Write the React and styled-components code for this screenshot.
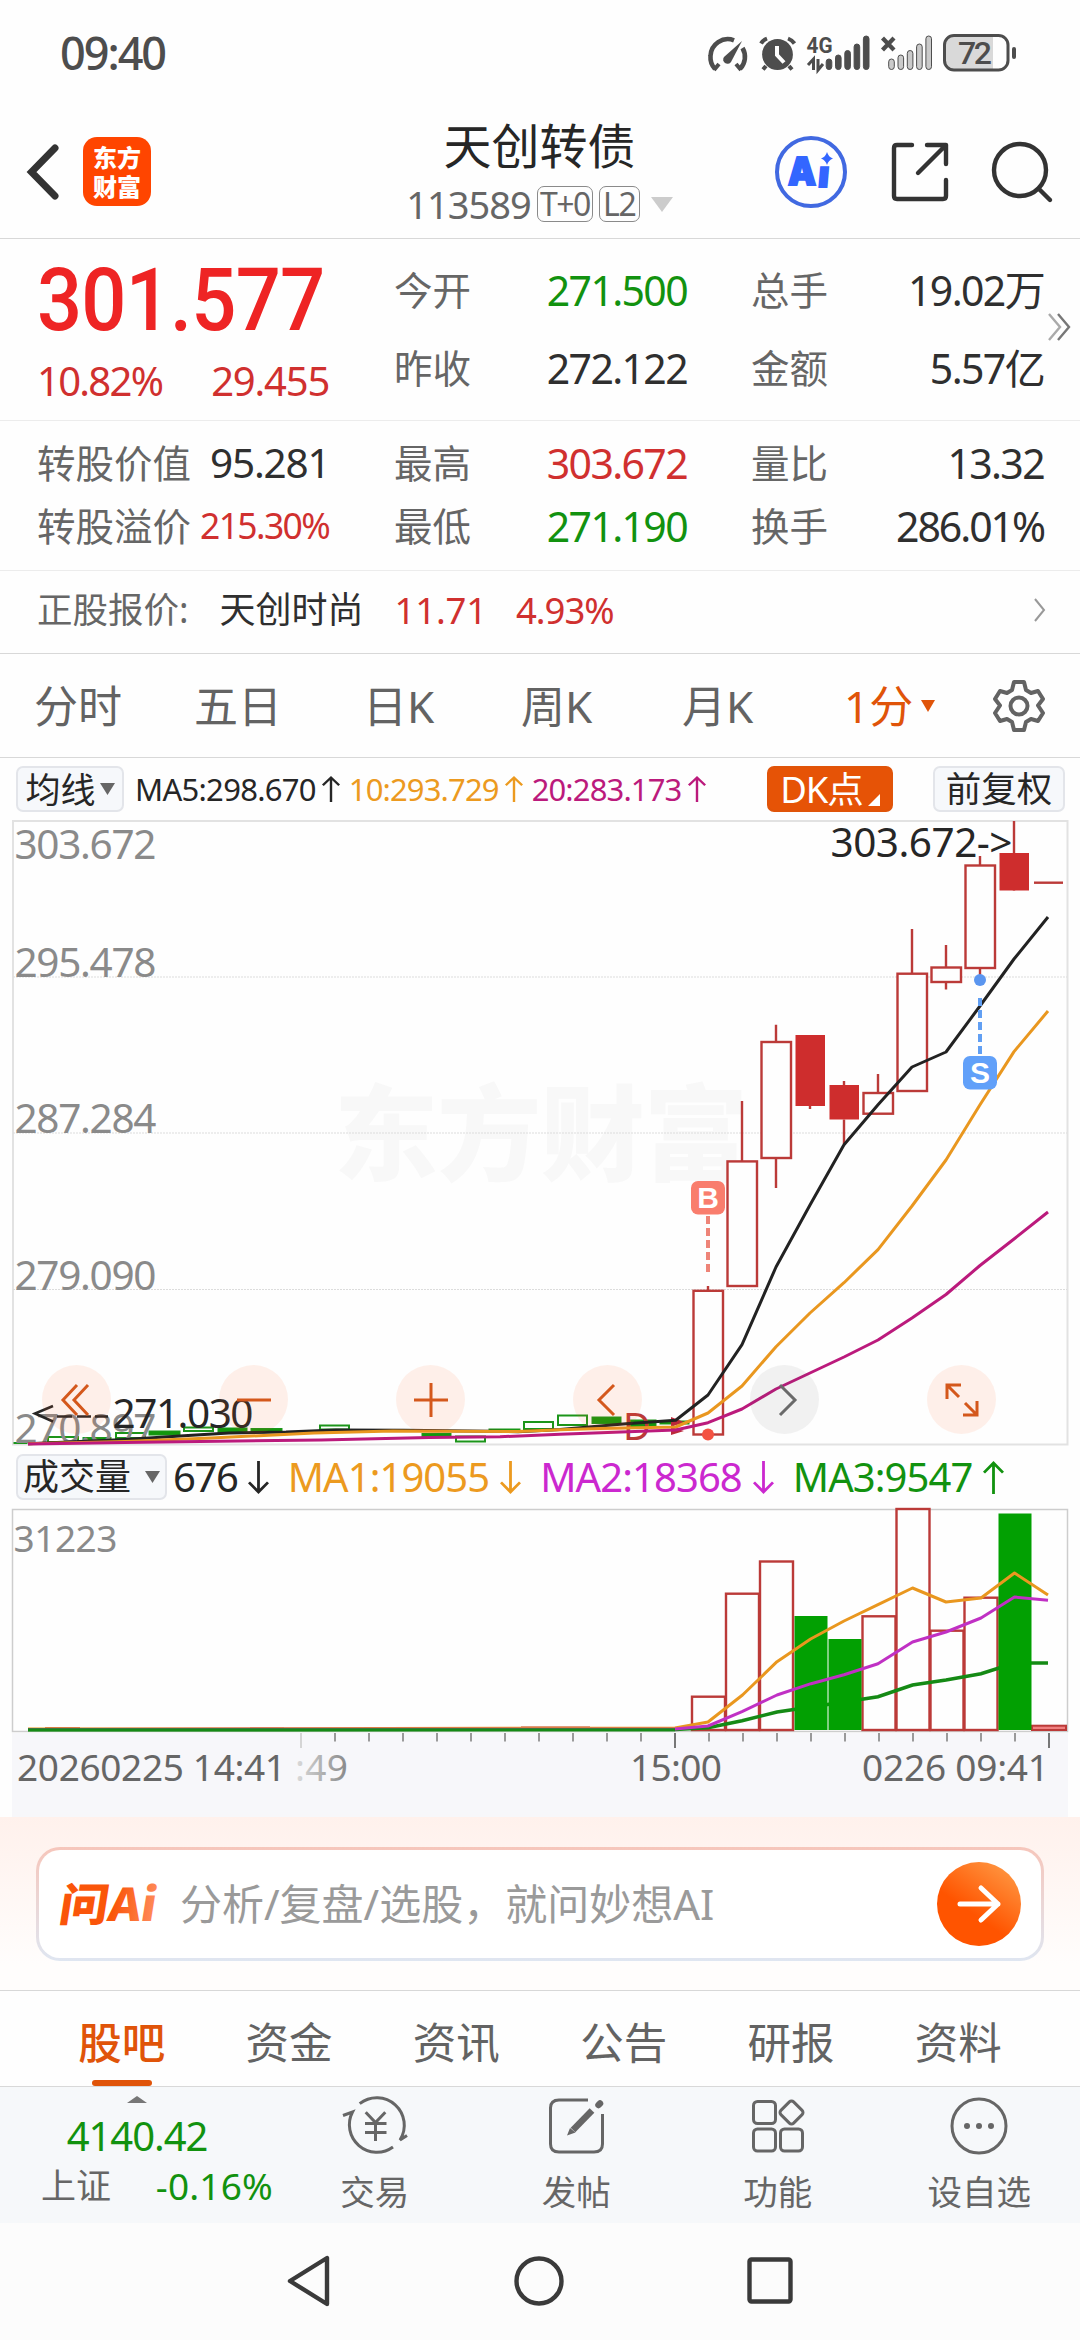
import React from "react";
import styled, { createGlobalStyle } from "styled-components";

const C = {
  ink: "#262626",
  value: "#2f2f2f",
  label: "#666666",
  rise: "#d0302f",
  fall: "#12920f",
  accent: "#e05409",
  amber: "#ec9a1f",
  plum: "#bb1a7c",
  violet: "#cb28cf",
  line: "#d8d8d8",
};

const Global = createGlobalStyle`
  * { box-sizing: border-box; }
  body {
    margin: 0;
    background: #fefefe;
    font-family: "Noto Sans", "Noto Sans CJK SC", sans-serif;
    color: ${C.ink};
  }
  svg { display: block; flex: none; overflow: visible; }
`;

const Screen = styled.div`
  width: 1080px;
  height: 2340px;
  display: flex;
  flex-direction: column;
  overflow: hidden;
`;

const Txt = styled.span`
  font-size: ${(p) => p.$s || 40}px;
  color: ${(p) => p.$c || "inherit"};
  letter-spacing: ${(p) => p.$ls || 0}em;
  font-weight: ${(p) => p.$w || 400};
  margin-left: ${(p) => p.$ml || 0}px;
  line-height: 1;
  white-space: nowrap;
  flex: none;
`;

const Num = styled(Txt)`
  letter-spacing: ${(p) => (p.$ls === undefined ? -0.033 : p.$ls)}em;
`;

/* ---------- status bar ---------- */
const StatusBar = styled.div`
  height: 107px;
  padding: 0 63px 2px 60px;
  display: flex;
  align-items: center;
  justify-content: space-between;
  color: #4d4d4d;
`;
const StatusIcons = styled.div`
  display: flex;
  align-items: center;
`;

/* ---------- header ---------- */
const Header = styled.header`
  height: 132px;
  padding: 0 28px 2px 27px;
  display: grid;
  grid-template-columns: 1fr 268px 1fr;
  align-items: center;
  border-bottom: 1px solid ${C.line};
`;
const HeaderLeft = styled.div`
  display: flex;
  align-items: center;
  gap: 24px;
`;
const AppLogo = styled.div`
  width: 68px;
  height: 69px;
  border-radius: 14px;
  background: #ff4500;
  color: #fff;
  display: flex;
  flex-direction: column;
  align-items: center;
  justify-content: center;
  gap: 5px;
  font: 900 24px/24px "Noto Sans CJK SC", sans-serif;
`;
const TitleBlock = styled.div`
  display: flex;
  flex-direction: column;
  align-items: center;
  gap: 15px;
  padding-top: 2px;
`;
const CodeRow = styled.div`
  height: 38px;
  display: flex;
  align-items: center;
  color: ${C.label};
`;
const Tag = styled.span`
  width: ${(p) => p.$w}px;
  height: 36px;
  margin-left: 6px;
  border: 1.5px solid #8a8a8a;
  border-radius: 7px;
  display: flex;
  align-items: center;
  justify-content: center;
`;
const HeaderRight = styled.div`
  display: flex;
  align-items: center;
  justify-content: flex-end;
  gap: 43px;
`;

/* ---------- quote ---------- */
const QuoteBlock = styled.section`
  height: ${(p) => p.$h}px;
  padding: ${(p) => p.$pt}px 36px 0 37px;
  display: grid;
  grid-template-columns: 357px 293px 64px 293px;
  border-bottom: 1px solid #ececec;
  align-content: start;
`;
const QuoteCol = styled.div`
  display: flex;
  flex-direction: column;
  gap: ${(p) => p.$gap}px;
`;
const Pair = styled.div`
  height: 40px;
  display: flex;
  align-items: center;
  justify-content: ${(p) => (p.$start ? "flex-start" : "space-between")};
`;
const Price = styled.div`
  width: 340px;
  height: 72px;
  margin-top: -6px;
  font: 500 87px/72px Roboto, "Noto Sans", sans-serif;
  transform: scaleX(0.913);
  transform-origin: left;
  color: #ee2424;
  letter-spacing: -0.01em;
`;
const MoreHandle = styled.div`
  grid-column: 1 / -1;
  height: 0;
  margin-top: -88px;
  padding-left: 1011px;
`;
const StockRow = styled.section`
  height: 83px;
  padding: 0 34px 4px 37px;
  display: flex;
  align-items: center;
  border-bottom: 1px solid ${C.line};
`;
const Spacer = styled.div`
  flex: 1;
`;
const Gap = styled.div`
  flex: none;
  width: ${(p) => p.$w || 0}px;
  height: ${(p) => p.$h || 0}px;
`;

/* ---------- period tabs ---------- */
const PeriodTabs = styled.nav`
  height: 104px;
  padding: 0 34px;
  display: grid;
  grid-template-columns: 160px 169px 158px 161px 162px 149px 52px;
  align-items: center;
  border-bottom: 1px solid ${C.line};
  color: #636363;
`;
const Period = styled.div`
  display: flex;
  align-items: center;
  color: ${(p) => (p.$on ? C.accent : "inherit")};
`;

/* ---------- indicator rows ---------- */
const IndicatorRow = styled.div`
  height: ${(p) => p.$h}px;
  padding: 0 15px 0 16px;
  display: flex;
  align-items: center;
`;
const Chip = styled.div`
  width: ${(p) => p.$w}px;
  height: 46px;
  border-radius: 7px;
  border: 2px solid ${(p) => (p.$hot ? C.accent : "#e3e5ea")};
  background: ${(p) => (p.$hot ? "#e65306" : "#f6f8fb")};
  color: ${(p) => (p.$hot ? "#fff" : C.ink)};
  display: flex;
  align-items: center;
  justify-content: center;
  gap: ${(p) => p.$gap || 0}px;
`;
const Reading = styled.div`
  display: flex;
  align-items: center;
  gap: ${(p) => p.$gap}px;
  margin-left: ${(p) => p.$ml}px;
  color: ${(p) => p.$c};
`;

/* ---------- charts ---------- */
const ChartArea = styled.div`
  position: relative;
`;
const ChartControls = styled.div`
  position: absolute;
  left: 42px;
  bottom: 11px;
  display: flex;
  gap: 108px;
`;
const RoundButton = styled.div`
  width: 69px;
  height: 69px;
  border-radius: 50%;
  background: ${(p) => (p.$grey ? "rgba(70,70,70,.07)" : "rgba(255,100,30,.095)")};
  color: ${(p) => (p.$grey ? "#6a6a6a" : "#d4581c")};
  display: flex;
  align-items: center;
  justify-content: center;
`;

/* ---------- assistant bar ---------- */
const Assistant = styled.section`
  height: 174px;
  padding: 30px 36px 0;
  background: linear-gradient(#fff1ec, #fffdfc 85%);
  border-bottom: 1px solid ${C.line};
`;
const AskBox = styled.div`
  height: 114px;
  border: 3px solid transparent;
  border-radius: 24px;
  background:
    linear-gradient(#fff, #fff) padding-box,
    linear-gradient(#f6c6bb, #dfe6f1) border-box;
  padding: 0 20px 0 20px;
  display: flex;
  align-items: center;
`;
const Go = styled.div`
  width: 84px;
  height: 84px;
  border-radius: 50%;
  background: linear-gradient(215deg, #ff9540 10%, #ff5400 60%);
  display: flex;
  align-items: center;
  justify-content: center;
`;

/* ---------- bottom ---------- */
const SectionTabs = styled.nav`
  height: 96px;
  padding: 0 38px;
  display: grid;
  grid-template-columns: repeat(6, 1fr);
  border-bottom: 1px solid ${C.line};
`;
const SectionTab = styled.div`
  padding-top: 30px;
  display: flex;
  flex-direction: column;
  align-items: center;
  justify-content: space-between;
  color: ${(p) => (p.$on ? C.accent : "#636363")};
  &::after {
    content: "";
    width: 60px;
    height: 6px;
    border-radius: 3px;
    background: ${(p) => (p.$on ? C.accent : "transparent")};
  }
`;
const Toolbar = styled.div`
  height: 136px;
  display: grid;
  grid-template-columns: 274px repeat(4, 1fr);
  background: #f6f8fa;
  color: #666;
`;
const IndexCell = styled.div`
  padding-top: 9px;
  display: flex;
  flex-direction: column;
  align-items: center;
  color: ${C.fall};
`;
const IndexChange = styled.div`
  width: 274px;
  padding: 0 1px 0 41px;
  margin-top: 11px;
  display: flex;
  align-items: center;
  justify-content: space-between;
`;
const Tool = styled.div`
  padding-top: 9px;
  display: flex;
  flex-direction: column;
  align-items: center;
  gap: 19px;
`;
const NavBar = styled.div`
  flex: 1;
  padding: 0 287px 2px 287px;
  background: #fcfcfc;
  display: flex;
  align-items: center;
  justify-content: space-between;
`;

/* ---------- small icons ---------- */
const Caret = ({ w, h, c, up }) => (
  <svg width={w} height={h} viewBox="0 0 10 10" preserveAspectRatio="none">
    <path d={up ? "M0 10H10L5 0Z" : "M0 0H10L5 10Z"} fill={c} />
  </svg>
);
const Arrow = ({ h, up, w = 21 }) => (
  <svg width={w} height={h} viewBox="0 0 21 34" preserveAspectRatio="none" fill="none" stroke="currentColor" strokeWidth="2.8">
    <path d={up ? "M10.5 34V2M1 12L10.5 2L20 12" : "M10.5 0V32M1 22L10.5 32L20 22"} />
  </svg>
);
const Icon = ({ w, h, sw = 4, children, ...rest }) => (
  <svg width={w} height={h} viewBox={`0 0 ${w} ${h}`} fill="none" stroke="currentColor" strokeWidth={sw} {...rest}>
    {children}
  </svg>
);

const SignalBars = ({ x, color }) =>
  [58, 54, 49.5, 43, 35].map((y, i) => (
    <rect key={i} x={x + i * 9.3} y={y - 33} width="5.6" height={68.5 - y} rx="2.8" fill={color} />
  ));

const StatusGlyphs = () => (
  <StatusIcons>
    <svg width="310" height="46" viewBox="706 -4 310 46" fill="none" stroke="#4d4d4d">
      <g strokeWidth="4.6">
        <path d="M714 35A17.3 17.3 0 0 1 709.5 22A17.3 17.3 0 0 1 733 6.3" />
        <path d="M741.5 14A17.3 17.3 0 0 1 739 35" />
        <path d="M713 36L718 30M740 36L735 30" strokeWidth="4" />
      </g>
      <path d="M741 7L723 23A4 4 0 1 0 730 28Z" fill="#4d4d4d" stroke="none" />
      <circle cx="776.5" cy="20.5" r="15.4" fill="#4d4d4d" stroke="none" />
      <path d="M760 9.5Q762 6 766 4.5M787 4.5Q791 6 793.5 9.5M765 32L762 35.5M788 32L791 35.5" strokeWidth="4" />
      <path d="M776 12V21L783 28.5" stroke="#fefefe" strokeWidth="4" />
      <text x="805.5" y="19" fontSize="22.5" fontWeight="700" fontFamily="Roboto" textLength="26" lengthAdjust="spacingAndGlyphs" fill="#4d4d4d" stroke="none">4G</text>
      <path d="M812.5 36V25L807 31M817 25V36L822 30" strokeWidth="3" />
      <SignalBars x={825.2} color="#4d4d4d" />
      <path d="M881.5 4L893 16M893 4L881.5 16" strokeWidth="4.2" />
      <SignalBars x={887.7} color="#cacaca" />
      <path d="M952 2.5H992V35H952Q944 35 944 27V11Q944 2.5 952 2.5Z" fill="#d9d9d9" stroke="none" />
      <rect x="943.5" y="1.5" width="63.5" height="34.5" rx="9.5" strokeWidth="3" />
      <rect x="1011" y="13" width="4" height="12" rx="2" fill="#4d4d4d" stroke="none" />
      <text x="957" y="30.3" fontSize="32" fontWeight="500" fontFamily="Roboto" textLength="34" fill="#4d4d4d" stroke="none">72</text>
    </svg>
  </StatusIcons>
);

const AiBadge = () => (
  <svg width="74" height="74" viewBox="0 0 74 74">
    <circle cx="37" cy="37" r="34" fill="none" stroke="#4169e1" strokeWidth="4" />
    <g fill="#3366ff" stroke="#3366ff" strokeWidth="2" fontFamily="Inter, sans-serif" fontWeight="900">
      <text x="14" y="49.5" fontSize="39" textLength="28" lengthAdjust="spacingAndGlyphs">A</text>
      <text x="43" y="52" fontSize="36" transform="skewX(-5) translate(5 0)">ı</text>
    </g>
    <path d="M53 17Q54.5 22 59 23.5Q54.5 25 53 30Q51.5 25 47 23.5Q51.5 22 53 17Z" fill="#3366ff" />
  </svg>
);

const AskLogo = () => (
  <svg width="99" height="48" viewBox="0 0 99 48">
    <defs>
      <linearGradient id="ask">
        <stop offset="0.55" stopColor="#fa550a" />
        <stop offset="1" stopColor="#ff8c5c" />
      </linearGradient>
    </defs>
    <g fill="url(#ask)" transform="skewX(-9)">
      <text x="5" y="41" fontSize="45" fontWeight="900" fontFamily="Noto Sans CJK SC" textLength="97" lengthAdjust="spacingAndGlyphs">问Ai</text>
    </g>
  </svg>
);

/* ---------- price chart ---------- */
const toPath = (pts) => "M" + pts.map((p) => p.join(" ")).join("L");

const CANDLES = [
  { x: 708, t: 1290.8, b: 1434.5, hi: 1286, lo: 1440 },
  { x: 742, t: 1161.4, b: 1286, hi: 1101 },
  { x: 776, t: 1042, b: 1158, hi: 1024.7, lo: 1188 },
  { x: 810, t: 1035, b: 1106, hi: 1035, lo: 1109, solid: true },
  { x: 844, t: 1085, b: 1119.5, hi: 1081, lo: 1144, solid: true },
  { x: 878, t: 1093, b: 1113.7, hi: 1074 },
  { x: 912, t: 973.7, b: 1091, hi: 929 },
  { x: 946, t: 967.5, b: 982, hi: 945, lo: 989.6 },
  { x: 980, t: 865.5, b: 968, hi: 856, lo: 984 },
  { x: 1014, t: 853, b: 890.5, hi: 821, lo: 891, solid: true },
];

const FLAT = [
  [14, 1442.5, 13, 1, 1], [48, 1437, 30, 5, 0], [83, 1437.5, 28, 2, 1], [116, 1433, 29, 5, 0],
  [149, 1431, 31, 4, 1], [184, 1427.5, 29, 3.5, 0], [218, 1428, 29, 5, 1], [251, 1428.5, 31, 3, 1],
  [320, 1425.5, 29, 4, 0], [422, 1433.5, 29, 3, 1], [456, 1436.5, 29, 5, 0], [489, 1429, 31, 2, 1],
  [524, 1422, 29, 7, 0], [558, 1415.5, 29, 9.5, 0], [592, 1417, 29, 6.5, 1], [628, 1420, 28, 6.5, 1],
  [660, 1421, 29, 3, 1],
];

const MA5 = [[28, 1443.7], [80, 1441.5], [125, 1439.5], [196, 1435], [229, 1433], [286, 1432], [336, 1430], [404, 1430.3], [518, 1431.7], [560, 1429.5], [626, 1423.7], [675.7, 1420.3], [708, 1395], [742, 1344.7], [776, 1267], [810, 1205], [844, 1144.7], [878, 1104.7], [912, 1067], [946, 1052], [980, 1006], [1014, 959], [1048, 917]];
const MA10 = [[28, 1443.7], [125, 1441.5], [211, 1438], [314, 1433], [393, 1431], [518, 1431.5], [560, 1429.8], [600, 1428.5], [675.7, 1427], [708, 1413], [742, 1386], [776, 1346.7], [810, 1313], [844, 1282.7], [878, 1249.6], [912, 1206], [946, 1160], [980, 1104.7], [1014, 1051.6], [1048, 1011]];
const MA20 = [[28, 1444], [125, 1442.5], [321, 1440], [429, 1437.5], [500, 1436.7], [560, 1434.3], [675.7, 1430], [708, 1422.7], [742, 1409], [776, 1389], [810, 1373], [844, 1357], [878, 1340], [912, 1318], [946, 1294.5], [980, 1265.5], [1014, 1239], [1048, 1212]];

const Marker = ({ x, y, color, letter }) => (
  <g>
    <rect x={x - 17} y={y} width="34" height="33.5" rx="7" fill={color} />
    <text x={x} y={y + 27} textAnchor="middle" fontSize="30" fontWeight="700" fontFamily="Liberation Sans" fill="#fff">{letter}</text>
  </g>
);

const PriceChart = () => (
  <svg width="1080" height="625" viewBox="0 820 1080 625" fontFamily='"Noto Sans", sans-serif' fontSize="40.5">
    <text x="334" y="1173" fontSize="104" fontWeight="900" fill="#f8f8f8" fontFamily="Noto Sans CJK SC" textLength="414">东方财富</text>
    <rect x="13" y="821" width="1054.5" height="623.5" fill="none" stroke="#e2e2e2" strokeWidth="2" />
    {[977, 1133, 1289.5].map((y) => (
      <path key={y} d={`M13 ${y}H1067`} stroke="#dcdcdc" strokeWidth="1" strokeDasharray="2 1" />
    ))}
    <g stroke="#1c951a" strokeWidth="2">
      {FLAT.map(([x, y, w, h, solid]) => (
        <rect key={x} x={x} y={y} width={w} height={h} fill={solid ? "#12980c" : "#fff"} strokeWidth={solid ? 1 : 2} />
      ))}
    </g>
    <g stroke="#bb3a38" strokeWidth="2.4">
      {CANDLES.map((c) => (
        <g key={c.x}>
          <path d={`M${c.x} ${c.hi}V${c.t}${c.lo ? `M${c.x} ${c.b}V${c.lo}` : ""}`} />
          <rect
            x={c.x - 14.5}
            y={c.t}
            width="29.5"
            height={c.b - c.t}
            fill={c.solid ? "#ce2d2d" : "#fefefe"}
            stroke={c.solid ? "none" : undefined}
          />
        </g>
      ))}
      <path d="M1034 882.7H1063" />
    </g>
    <g fill="#8a8a8a">
      {[["303.672", 859], ["295.478", 977], ["287.284", 1133], ["279.090", 1290], ["270.897", 1442.5]].map(([t, y]) => (
        <text key={t} x="14.5" y={y} textLength="142">{t}</text>
      ))}
    </g>
    <g fill={C.ink}>
      <text x="830.5" y="857" textLength="182">303.672-&gt;</text>
      <text x="112.5" y="1428" textLength="141">271.030</text>
      <path d="M53 1406L35 1413.5L53 1421.5M57 1416.5H72M77 1416.5H91M95 1416.5H108" fill="none" stroke={C.ink} strokeWidth="2.6" />
    </g>
    <text x="623" y="1440" fontSize="38" fill="#bb3a38">D</text>
    <path d="M671 1417L684 1422L671 1427ZM671 1427L684 1431L671 1435Z" fill="#bb2a3a" />
    <g fill="none" strokeWidth="3" strokeLinejoin="round">
      <path d={toPath(MA5)} stroke="#222" />
      <path d={toPath(MA10)} stroke="#e9971f" />
      <path d={toPath(MA20)} stroke={C.plum} />
    </g>
    <path d="M708 1216V1275" stroke="#ee8478" strokeWidth="4" strokeDasharray="8 4" />
    <path d="M980 998V1055" stroke="#619ff3" strokeWidth="4" strokeDasharray="8 4" />
    <circle cx="708" cy="1434.5" r="6" fill="#f45242" />
    <circle cx="980" cy="980" r="6" fill="#5a95ef" />
    <Marker x={708} y={1181} color="#f97d6d" letter="B" />
    <Marker x={980} y={1056} color="#61a0f9" letter="S" />
  </svg>
);

/* ---------- volume chart ---------- */
const RISING = [[708, 1696.7], [742, 1593.7], [776, 1561.5], [878.5, 1616.3], [912.5, 1509], [946.5, 1630.7], [980.5, 1597.7]];
const FALLING = [[810.5, 1616], [844.5, 1639], [1014.5, 1513.5]];
const VMA1 = [[28, 1729], [675, 1728], [708, 1722], [742.5, 1695], [777, 1661.7], [810.6, 1639], [844, 1621], [878, 1604.7], [912.5, 1588], [946, 1602], [981, 1598], [1014.5, 1573], [1048, 1595]];
const VMA2 = [[28, 1729.5], [675, 1729], [708, 1726], [742, 1711.7], [777, 1695], [811, 1683.7], [844, 1674.7], [878, 1663.7], [912.5, 1642], [946, 1632], [981, 1618], [1014.5, 1597], [1048, 1600.3]];
const VMA3 = [[28, 1729.7], [675, 1729.5], [708, 1727.7], [742, 1720.7], [777, 1712], [811, 1707], [844, 1702], [878, 1696.7], [912.5, 1685], [946, 1680], [981, 1673.7], [1014.5, 1663], [1048, 1663]];

const VolumeChart = () => (
  <svg width="1080" height="308" viewBox="0 1509 1080 308" fontFamily='"Noto Sans", sans-serif' fontSize="37">
    <rect x="12" y="1733" width="1056" height="84" fill="#f7f7fa" />
    <rect x="12.5" y="1509.5" width="1055" height="222" fill="none" stroke="#cdcdcd" strokeWidth="1.5" />
    <text x="13.5" y="1552" fill="#8a8a8a" textLength="104">31223</text>
    <path d="M45 1728.3H80M115 1729H150M250 1728.5H284M454 1728.3H488M521 1727.5H590" stroke="#bb3a38" strokeWidth="2" />
    {RISING.map(([x, t]) => (
      <rect key={x} x={x - 16} y={t} width="33" height={1730 - t} fill="#fefefe" stroke="#bb3a38" strokeWidth="2.4" />
    ))}
    <rect x="1032" y="1725.7" width="34" height="4.3" fill="#f08080" stroke="#bb3a38" strokeWidth="2" />
    <path d={toPath(VMA3)} fill="none" stroke="#158a15" strokeWidth="3.5" />
    {FALLING.map(([x, t]) => (
      <rect key={x} x={x - 16} y={t} width="33" height={1730 - t} fill="#02a002" />
    ))}
    <g fill="none" strokeWidth="3" strokeLinejoin="round">
      <path d={toPath(VMA1)} stroke="#e9971f" />
      <path d={toPath(VMA2)} stroke="#c030c4" />
    </g>
    <path d="M28 1729.7H675" stroke="#158a15" strokeWidth="3" />
    <g stroke="#9a9a9a" strokeWidth="2">
      {Array.from({ length: 21 }, (_, i) => 335 + i * 34).map((x) => (
        <path key={x} d={`M${x} 1733V1741.5`} />
      ))}
      <path d="M301 1733V1748" stroke="#d5d5d5" />
      <path d="M675 1733V1748M1049 1733V1748" stroke="#777" />
    </g>
    <g fill="#666">
      <text x="17" y="1781" textLength="269">20260225 14:41</text>
      <text x="295" y="1781" textLength="53" fill="url(#fadeIn)">:49</text>
      <text x="630" y="1781" textLength="92">15:00</text>
      <text x="862" y="1781" textLength="187">0226 09:41</text>
    </g>
    <defs>
      <linearGradient id="fadeIn">
        <stop offset="0" stopColor="#dcdcdc" />
        <stop offset="1" stopColor="#888" />
      </linearGradient>
    </defs>
  </svg>
);

const Field = ({ name, value, color = C.value, ls = -0.04 }) => (
  <Pair>
    <Txt $s={38.5} $c={C.label}>{name}</Txt>
    <Num $s={41} $c={color} $ls={ls}>{value}</Num>
  </Pair>
);

const SECTIONS = ["股吧", "资金", "资讯", "公告", "研报", "资料"];

export default function App() {
  return (
    <Screen>
      <Global />
      <StatusBar>
        <Num $s={45} $w={500} $ls={-0.045}>09:40</Num>
        <StatusGlyphs />
      </StatusBar>

      <Header>
        <HeaderLeft>
          <Icon w={32} h={56} sw={7} stroke="#333" strokeLinecap="round">
            <path d="M28 4L4.5 28L28 52" />
          </Icon>
          <AppLogo>
            <span>东方</span>
            <span>财富</span>
          </AppLogo>
        </HeaderLeft>
        <TitleBlock>
          <Txt $s={48}>天创转债</Txt>
          <CodeRow>
            <Num $s={38} $ls={-0.025}>113589</Num>
            <Tag $w={56}><Num $s={32} $ls={-0.05}>T+0</Num></Tag>
            <Tag $w={41}><Num $s={32} $ls={-0.04}>L2</Num></Tag>
            <Gap $w={11} />
            <Caret w={22} h={15} c="#cccccc" />
          </CodeRow>
        </TitleBlock>
        <HeaderRight>
          <AiBadge />
          <Icon w={58} h={60} sw={4.4} stroke="#333" strokeLinecap="round" strokeLinejoin="round">
            <path d="M21 3H6Q3 3 3 6V54Q3 57 6 57H52Q55 57 55 54V38M36 3H55V22M55 3L27 31" />
          </Icon>
          <Icon w={60} h={62} sw={4.4} stroke="#333" strokeLinecap="round">
            <circle cx="28" cy="29" r="26" />
            <path d="M47 48L58 59" />
          </Icon>
        </HeaderRight>
      </Header>

      <QuoteBlock $h={182} $pt={31}>
        <QuoteCol $gap={25}>
          <Price>301.577</Price>
          <Pair $start>
            <Num $c={C.rise} $ls={-0.043}>10.82%</Num>
            <Num $c={C.rise} $ls={-0.03} $ml={49}>29.455</Num>
          </Pair>
        </QuoteCol>
        <QuoteCol $gap={38}>
          <Field name="今开" value="271.500" color={C.fall} />
          <Field name="昨收" value="272.122" />
        </QuoteCol>
        <div />
        <QuoteCol $gap={38}>
          <Field name="总手" value="19.02万" />
          <Field name="金额" value="5.57亿" />
        </QuoteCol>
        <MoreHandle>
          <Icon w={24} h={28} sw={2.4}>
            <path d="M10 1L21 14L10 27" stroke="#777" />
            <path d="M1 1L12 14L1 27" stroke="#aaa" />
          </Icon>
        </MoreHandle>
      </QuoteBlock>

      <QuoteBlock $h={150} $pt={22}>
        <QuoteCol $gap={23}>
          <Pair $start>
            <Txt $s={38.5} $c={C.label}>转股价值</Txt>
            <Num $s={40.5} $c={C.value} $ls={-0.03} $ml={19}>95.281</Num>
          </Pair>
          <Pair $start>
            <Txt $s={38.5} $c={C.label}>转股溢价</Txt>
            <Num $s={35.5} $c={C.rise} $ls={-0.046} $ml={9}>215.30%</Num>
          </Pair>
        </QuoteCol>
        <QuoteCol $gap={23}>
          <Field name="最高" value="303.672" color={C.rise} />
          <Field name="最低" value="271.190" color={C.fall} />
        </QuoteCol>
        <div />
        <QuoteCol $gap={23}>
          <Field name="量比" value="13.32" />
          <Field name="换手" value="286.01%" ls={-0.05} />
        </QuoteCol>
      </QuoteBlock>

      <StockRow>
        <Txt $s={35.5} $c={C.label}>正股报价:</Txt>
        <Txt $s={36} $c={C.value} $ml={31}>天创时尚</Txt>
        <Num $s={36.5} $c={C.rise} $ls={-0.005} $ml={31}>11.71</Num>
        <Num $s={36.5} $c={C.rise} $ls={-0.028} $ml={29}>4.93%</Num>
        <Spacer />
        <Icon w={12} h={24} sw={2} stroke="#999">
          <path d="M1 1L10 12L1 23" />
        </Icon>
      </StockRow>

      <PeriodTabs>
        {["分时", "五日", "日K", "周K", "月K"].map((t) => (
          <Period key={t}><Txt $s={44}>{t}</Txt></Period>
        ))}
        <Period $on>
          <Txt $s={44}>1分</Txt>
          <Gap $w={8} />
          <Caret w={14} h={12} c={C.accent} />
        </Period>
        <Icon w={52} h={54} sw={4} strokeLinejoin="round">
          <path d="M21 3H31L33 11L38 14L45 12L50 20L45 26.5L50 34L45 42L38 40L33 43L31 51H21L19 43L14 40L7 42L2 34L7 26.5L2 20L7 12L14 14L19 11Z" />
          <circle cx="26" cy="27" r="8.5" />
        </Icon>
      </PeriodTabs>

      <IndicatorRow $h={62}>
        <Chip $w={108} $gap={4}>
          <Txt $s={35}>均线</Txt>
          <Caret w={15} h={12} c="#666" />
        </Chip>
        <Reading $c={C.ink} $gap={6} $ml={11}><Num $s={31} $ls={-0.023}>MA5:298.670</Num><Arrow up w={18} h={26} /></Reading>
        <Reading $c={C.amber} $gap={6} $ml={9}><Num $s={31} $ls={-0.028}>10:293.729</Num><Arrow up w={18} h={26} /></Reading>
        <Reading $c={C.plum} $gap={7} $ml={9}><Num $s={31} $ls={-0.028}>20:283.173</Num><Arrow up w={18} h={26} /></Reading>
        <Spacer />
        <Chip $w={126} $hot $gap={5}>
          <Txt $s={36.5} $ls={-0.03}>DK点</Txt>
          <Icon w={12} h={12} style={{ marginTop: 22 }}><path d="M12 0V12H0Z" fill="#fff" stroke="none" /></Icon>
        </Chip>
        <Gap $w={40} />
        <Chip $w={132}><Txt $s={35.5}>前复权</Txt></Chip>
      </IndicatorRow>

      <ChartArea>
        <PriceChart />
        <ChartControls>
          <RoundButton><Icon w={34} h={34} sw={3}><path d="M17 2L3 17L17 32M28 2L14 17L28 32" /></Icon></RoundButton>
          <RoundButton><Icon w={34} h={34} sw={3}><path d="M0 17H34" /></Icon></RoundButton>
          <RoundButton><Icon w={34} h={34} sw={3}><path d="M0 17H34M17 0V34" /></Icon></RoundButton>
          <RoundButton><Icon w={20} h={34} sw={3}><path d="M16 2L1 17L16 32" /></Icon></RoundButton>
          <RoundButton $grey><Icon w={14} h={34} sw={3}><path d="M2 2L17 17L2 32" /></Icon></RoundButton>
          <RoundButton><Icon w={34} h={34} sw={3}><path d="M2 16V2H16M2 2L14 14M32 18V32H18M32 32L20 20" /></Icon></RoundButton>
        </ChartControls>
      </ChartArea>

      <IndicatorRow $h={64}>
        <Chip $w={151} $gap={14}>
          <Txt $s={36}>成交量</Txt>
          <Caret w={15} h={12} c="#666" />
        </Chip>
        <Reading $c={C.ink} $gap={10} $ml={6}><Num>676</Num><Arrow h={33} /></Reading>
        <Reading $c={C.amber} $gap={11} $ml={19}><Num $ls={-0.023}>MA1:19055</Num><Arrow h={33} /></Reading>
        <Reading $c={C.violet} $gap={11} $ml={19}><Num $ls={-0.023}>MA2:18368</Num><Arrow h={33} /></Reading>
        <Reading $c={C.fall} $gap={11} $ml={19}><Num $ls={-0.023}>MA3:9547</Num><Arrow up h={33} /></Reading>
      </IndicatorRow>

      <VolumeChart />

      <Assistant>
        <AskBox>
          <AskLogo />
          <Txt $s={42} $c="#9a9a9a" $ml={22}>分析/复盘/选股，就问妙想AI</Txt>
          <Spacer />
          <Go>
            <Icon w={46} h={40} sw={5} stroke="#fff" strokeLinecap="round" strokeLinejoin="round">
              <path d="M4 20H42M25 4L42 20L25 36" />
            </Icon>
          </Go>
        </AskBox>
      </Assistant>

      <SectionTabs>
        {SECTIONS.map((t, i) => (
          <SectionTab key={t} $on={i === 0}><Txt $s={43.5} $w={i === 0 ? 500 : 400}>{t}</Txt></SectionTab>
        ))}
      </SectionTabs>

      <Toolbar>
        <IndexCell>
          <Caret up w={20} h={7} c="#777" />
          <Gap $h={13} />
          <Num $ls={-0.026}>4140.42</Num>
          <IndexChange>
            <Txt $s={35} $c="#666">上证</Txt>
            <Num $s={37} $ls={0.005}>-0.16%</Num>
          </IndexChange>
        </IndexCell>
        <Tool>
          <Icon w={66} h={60} sw={3}>
            <path d="M17.7 7.7A27.5 27.5 0 0 1 58 44L65 39.5M51 51A27.5 27.5 0 0 1 10.5 16L1 19.5" />
            <path d="M23.7 16.3L33.5 26.5L43.3 16.3M23 27.5H44.5M23 36.5H44.5M33.5 26V45" />
          </Icon>
          <Txt $s={34.5}>交易</Txt>
        </Tool>
        <Tool>
          <Icon w={58} h={60} sw={3}>
            <path d="M41 4H12Q3.5 4 3.5 12V48Q3.5 56 12 56H47Q55.5 56 55.5 48V18" />
            <path d="M26 34L45 14.5" strokeWidth="6.5" />
            <path d="M23 32L20 39.5L28.5 36.5Z" fill="currentColor" stroke="none" />
            <path d="M51.5 9L53 7.5" strokeWidth="6.5" strokeLinecap="round" />
          </Icon>
          <Txt $s={34.5}>发帖</Txt>
        </Tool>
        <Tool>
          <Icon w={54} h={60} sw={3}>
            <rect x="2.5" y="5.5" width="22" height="22" rx="4" />
            <rect x="2.5" y="33" width="22" height="22" rx="4" />
            <rect x="29.5" y="33" width="22" height="22" rx="4" />
            <rect x="31.5" y="7.5" width="18" height="18" rx="3" transform="rotate(45 40.5 16.5)" />
          </Icon>
          <Txt $s={34.5}>功能</Txt>
        </Tool>
        <Tool>
          <Icon w={60} h={60} sw={3}>
            <circle cx="30" cy="30" r="27" />
            <g fill="currentColor" stroke="none">
              <circle cx="18" cy="30" r="3" />
              <circle cx="30" cy="30" r="3" />
              <circle cx="42" cy="30" r="3" />
            </g>
          </Icon>
          <Txt $s={34.5}>设自选</Txt>
        </Tool>
      </Toolbar>

      <NavBar>
        <Icon w={44} h={52} sw={4.4} stroke="#3a3a3a" strokeLinejoin="round">
          <path d="M40 3V49L3 26Z" />
        </Icon>
        <Icon w={50} h={52} sw={4.4} stroke="#3a3a3a">
          <circle cx="25" cy="26" r="22.5" />
        </Icon>
        <Icon w={46} h={52} sw={4.4} stroke="#3a3a3a">
          <rect x="2.5" y="4.5" width="41" height="42" rx="2" />
        </Icon>
      </NavBar>
    </Screen>
  );
}
